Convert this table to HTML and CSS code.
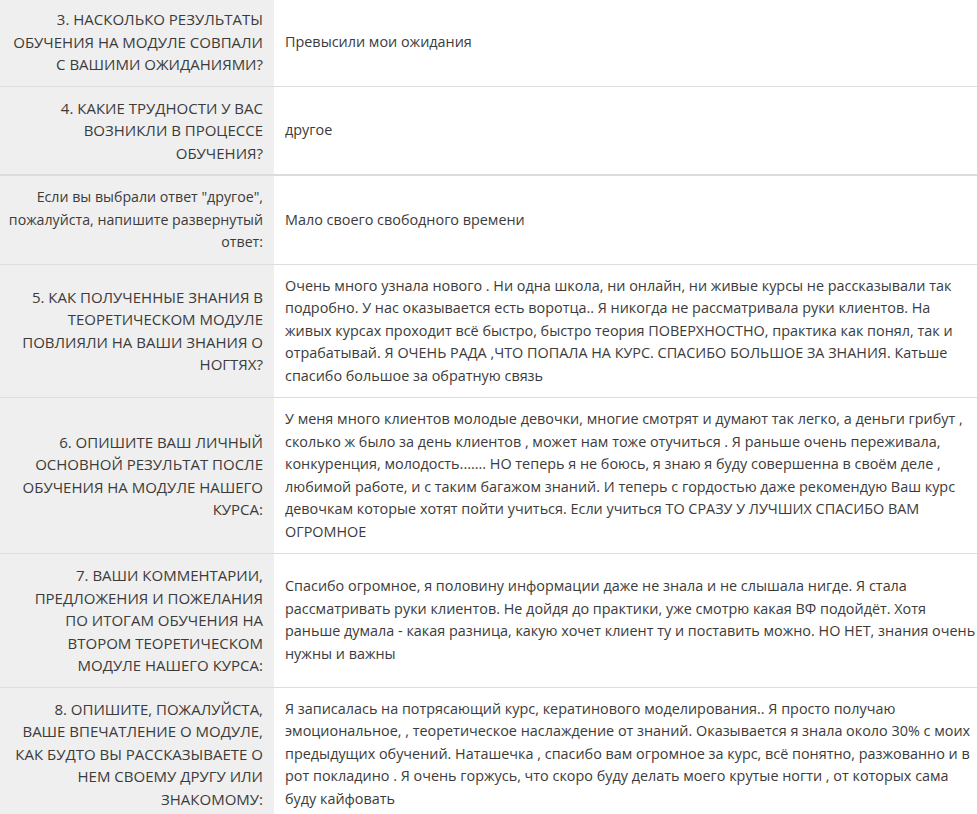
FILE: index.html
```html
<!DOCTYPE html>
<html lang="ru">
<head>
<meta charset="utf-8">
<title>Ответы</title>
<link rel="stylesheet" href="styles.css">
</head>
<body>
<table class="answers">
  <tr>
    <th>3. НАСКОЛЬКО РЕЗУЛЬТАТЫ<br>ОБУЧЕНИЯ НА МОДУЛЕ СОВПАЛИ<br>С ВАШИМИ ОЖИДАНИЯМИ?</th>
    <td>Превысили мои ожидания</td>
  </tr>
  <tr>
    <th>4. КАКИЕ ТРУДНОСТИ У ВАС<br>ВОЗНИКЛИ В ПРОЦЕССЕ<br>ОБУЧЕНИЯ?</th>
    <td>другое</td>
  </tr>
  <tr class="group-start">
    <th class="plain">Если вы выбрали ответ "другое",<br>пожалуйста, напишите развернутый<br>ответ:</th>
    <td>Мало своего свободного времени</td>
  </tr>
  <tr>
    <th>5. КАК ПОЛУЧЕННЫЕ ЗНАНИЯ В<br>ТЕОРЕТИЧЕСКОМ МОДУЛЕ<br>ПОВЛИЯЛИ НА ВАШИ ЗНАНИЯ О<br>НОГТЯХ?</th>
    <td>Очень много узнала нового . Ни одна школа, ни онлайн, ни живые курсы не рассказывали так<br>подробно. У нас оказывается есть воротца.. Я никогда не рассматривала руки клиентов. На<br>живых курсах проходит всё быстро, быстро теория ПОВЕРХНОСТНО, практика как понял, так и<br>отрабатывай. Я ОЧЕНЬ РАДА ,ЧТО ПОПАЛА НА КУРС. СПАСИБО БОЛЬШОЕ ЗА ЗНАНИЯ. Катьше<br>спасибо большое за обратную связь</td>
  </tr>
  <tr>
    <th>6. ОПИШИТЕ ВАШ ЛИЧНЫЙ<br>ОСНОВНОЙ РЕЗУЛЬТАТ ПОСЛЕ<br>ОБУЧЕНИЯ НА МОДУЛЕ НАШЕГО<br>КУРСА:</th>
    <td>У меня много клиентов молодые девочки, многие смотрят и думают так легко, а деньги грибут ,<br>сколько ж было за день клиентов , может нам тоже отучиться . Я раньше очень переживала,<br>конкуренция, молодость....... НО теперь я не боюсь, я знаю я буду совершенна в своём деле ,<br>любимой работе, и с таким багажом знаний. И теперь с гордостью даже рекомендую Ваш курс<br>девочкам которые хотят пойти учиться. Если учиться ТО СРАЗУ У ЛУЧШИХ СПАСИБО ВАМ<br>ОГРОМНОЕ</td>
  </tr>
  <tr>
    <th>7. ВАШИ КОММЕНТАРИИ,<br>ПРЕДЛОЖЕНИЯ И ПОЖЕЛАНИЯ<br>ПО ИТОГАМ ОБУЧЕНИЯ НА<br>ВТОРОМ ТЕОРЕТИЧЕСКОМ<br>МОДУЛЕ НАШЕГО КУРСА:</th>
    <td>Спасибо огромное, я половину информации даже не знала и не слышала нигде. Я стала<br>рассматривать руки клиентов. Не дойдя до практики, уже смотрю какая ВФ подойдёт. Хотя<br>раньше думала - какая разница, какую хочет клиент ту и поставить можно. НО НЕТ, знания очень<br>нужны и важны</td>
  </tr>
  <tr>
    <th>8. ОПИШИТЕ, ПОЖАЛУЙСТА,<br>ВАШЕ ВПЕЧАТЛЕНИЕ О МОДУЛЕ,<br>КАК БУДТО ВЫ РАССКАЗЫВАЕТЕ О<br>НЕМ СВОЕМУ ДРУГУ ИЛИ<br>ЗНАКОМОМУ:</th>
    <td>Я записалась на потрясающий курс, кератинового моделирования.. Я просто получаю<br>эмоциональное, , теоретическое наслаждение от знаний. Оказывается я знала около 30% с моих<br>предыдущих обучений. Наташечка , спасибо вам огромное за курс, всё понятно, разжованно и в<br>рот покладино . Я очень горжусь, что скоро буду делать моего крутые ногти , от которых сама<br>буду кайфовать</td>
  </tr>
</table>
</body>
</html>
```
FILE: styles.css
```css
html, body {
  margin: 0;
  padding: 0;
  background: #ffffff;
}

.answers {
  width: 100%;
  margin-top: -2px;
  border-collapse: collapse;
  table-layout: fixed;
  font-family: "Open Sans", "Noto Sans", sans-serif;
  line-height: 22.5px;
  color: #3b3b3b;
}

.answers tr {
  border-bottom: 1px solid #dedede;
}

.answers tr.group-start {
  border-top: 2px solid #dcdcdc;
}

.answers th {
  width: 263px;
  padding: 10px 11px 10px 0;
  background: #efefef;
  text-align: right;
  font-size: 15px;
  font-weight: 400;
  vertical-align: middle;
  white-space: nowrap;
}

.answers th.plain {
  font-size: 14.2px;
}

.answers td {
  padding: 10px 6px 10px 11px;
  font-size: 14.4px;
  text-align: left;
  vertical-align: middle;
  white-space: nowrap;
}
```
